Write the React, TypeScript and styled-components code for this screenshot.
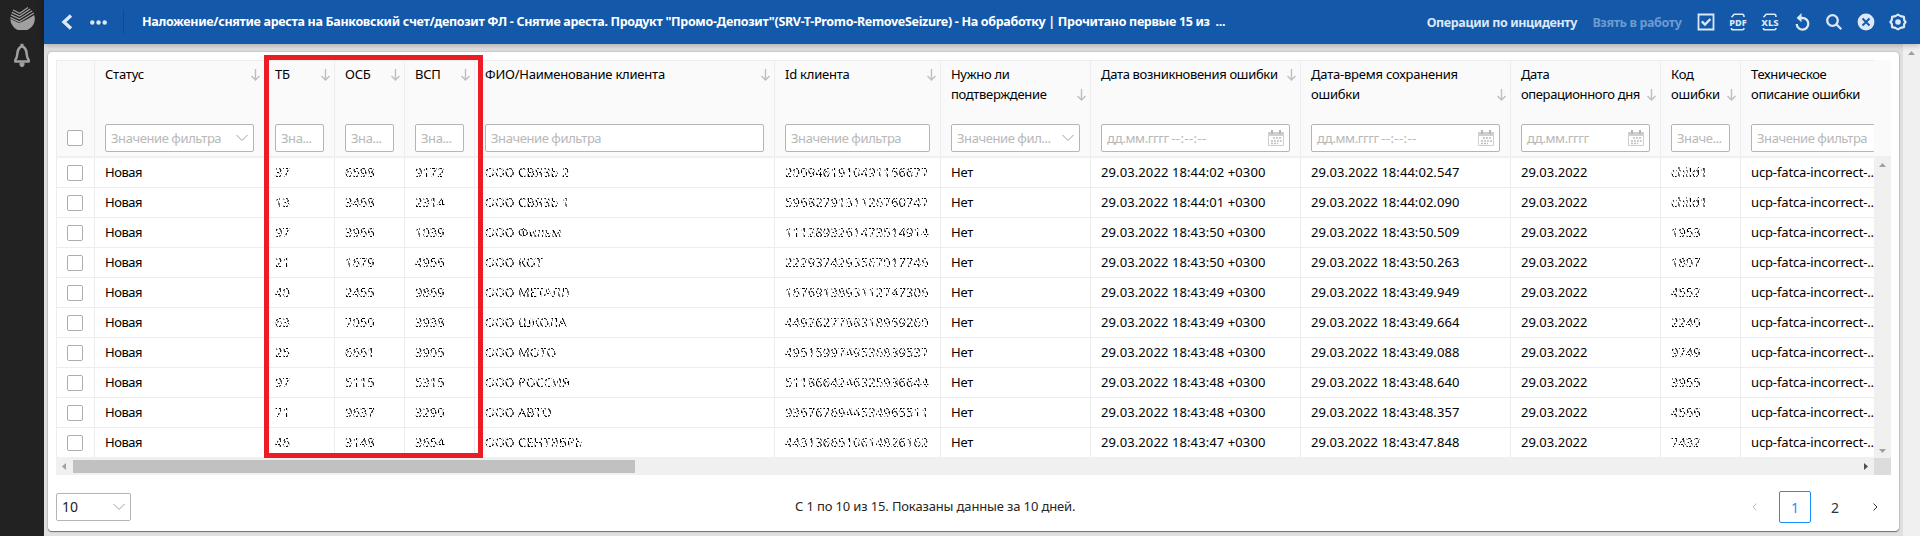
import React from "react";
import styled, { createGlobalStyle, css } from "styled-components";

const GlobalStyle = createGlobalStyle`
  * { box-sizing: border-box; }
  body { margin: 0; background: #e0e0e0; overflow: hidden; }
  body, input, button { font-family: "Noto Sans", "Open Sans", sans-serif; font-size: 13px; color: #000; }
`;

const Page = styled.div`
  display: flex;
  width: 1920px;
  height: 536px;
`;

const Sidebar = styled.nav`
  width: 44px;
  flex: none;
  background: #222;
  display: flex;
  flex-direction: column;
  align-items: center;
  padding-top: 6px;
  gap: 13px;
  svg { display: block; }
`;

const Main = styled.div`
  flex: 1;
  min-width: 0;
  display: flex;
  flex-direction: column;
`;

const TopBar = styled.header`
  height: 44px;
  flex: none;
  background: #1358a9;
  color: #fff;
  display: flex;
  align-items: center;
  padding: 0 13px 0 17px;
  z-index: 1;
  box-shadow: 0 1px 6px rgba(0, 0, 0, 0.28);
  svg { display: block; flex: none; }
`;

const MoreButton = styled.span`
  display: flex;
  margin: 0 16px 0 17px;
`;

const BarDivider = styled.span`
  width: 1px;
  height: 24px;
  background: #0f4a8f;
`;

const Title = styled.h1`
  margin: -1px 0 0 18px;
  font-size: 12.5px;
  font-weight: 700;
  line-height: 20px;
  white-space: pre;
  letter-spacing: -0.32px;
  flex: 1;
`;

const BarAction = styled.span<{ $dim?: boolean }>`
  font-size: 12.5px;
  font-weight: 700;
  line-height: 20px;
  margin: 2px 15.5px 0 0;
  white-space: nowrap;
  letter-spacing: -0.37px;
  color: ${(p) => (p.$dim ? "#6d9bd0" : "#dce8f6")};
`;

const BarIcons = styled.div`
  display: flex;
  gap: 14px;
`;

const Content = styled.div`
  flex: 1;
  min-height: 0;
  display: flex;
`;

const Workspace = styled.main`
  flex: 1;
  min-width: 0;
  padding: 8px 4px 4px;
`;

const Card = styled.section`
  height: 479px;
  background: #fff;
  border-radius: 4px;
  padding: 8px;
  box-shadow: 0 1px 1px rgba(0, 0, 0, 0.45), 0 0 2px rgba(0, 0, 0, 0.35);
`;

const TableFrame = styled.div`
  position: relative;
  width: 1835px;
`;

const Highlight = styled.div`
  position: absolute;
  left: 208px;
  top: -5px;
  width: 219px;
  height: 403px;
  border: 5px solid #ed1c24;
  z-index: 2;
`;

const HeadRow = styled.div`
  display: flex;
  height: 98px;
  width: 1835px;
  background: #fafafa;
  border-bottom: 2px solid #f0f0f0;
`;

const Clip = styled.div`
  display: flex;
  width: 1818px;
  overflow: hidden;
`;

const columnBox = css<{ $w: number; $first?: boolean; $last?: boolean }>`
  flex: none;
  width: ${(p) => p.$w}px;
  border-right: ${(p) => (p.$last ? "none" : "1px solid #ededed")};
  border-left: ${(p) => (p.$first ? "1px solid #ededed" : "none")};
`;

const HeadCell = styled.div<{ $w: number; $first?: boolean; $last?: boolean }>`
  ${columnBox}
  border-top: 1px solid #ededed;
  padding: 3px 10px 4px;
  display: flex;
  flex-direction: column;
  justify-content: space-between;
`;

const HeadTop = styled.div`
  display: flex;
  justify-content: space-between;
  align-items: flex-end;
  margin-right: -6px;
  svg { display: block; flex: none; margin-bottom: 3px; }
`;

const HeadLabel = styled.span<{ $track?: number }>`
  line-height: 20px;
  white-space: pre;
  letter-spacing: ${(p) => p.$track ?? -0.22}px;
`;

const Filter = styled.div`
  flex: none;
  height: 28px;
  border: 1px solid #b5b5b5;
  border-radius: 2px;
  background: #fff;
  display: flex;
  align-items: center;
  justify-content: space-between;
  padding: 0 5px;
  color: #b8b8b8;
  svg { display: block; flex: none; }
`;

const FilterText = styled.span`
  line-height: 26px;
  white-space: pre;
  letter-spacing: -0.42px;
`;

const TimeMask = styled.span`
  letter-spacing: 0.4px;
  margin-left: -0.5px;
`;

const CheckBox = styled.span`
  display: block;
  width: 16px;
  height: 16px;
  border: 1px solid #adadad;
  border-radius: 2px;
  background: #fff;
`;

const HeadCheck = styled.div`
  margin-top: auto;
  padding-bottom: 6px;
`;

const Body = styled.div`
  display: flex;
  height: 299px;
`;

const Rows = styled.div`
  width: 1818px;
  overflow: hidden;
`;

const Row = styled.div`
  display: flex;
  height: 30px;
`;

const Cell = styled.div<{ $w: number; $first?: boolean; $last?: boolean }>`
  ${columnBox}
  border-bottom: 1px solid #ededed;
  padding: 0 0 0 10px;
  display: flex;
  align-items: center;
  white-space: nowrap;
  line-height: 20px;
`;

const CellText = styled.span<{ $track?: number }>`
  letter-spacing: ${(p) => p.$track ?? 0}px;
  margin-top: -1px;
`;

/* Personal data is scratched out so that only fragments of the glyphs stay. */
const Scrubbed = styled(CellText)`
  mask-image: repeating-linear-gradient(63deg, #000 0 1.9px, transparent 1.9px 3.1px);
`;

const VScroll = styled.div`
  width: 17px;
  margin-top: -1px;
  height: 301px;
  background: #f0f0f0;
  display: flex;
  flex-direction: column;
  justify-content: space-between;
  align-items: center;
  padding: 6px 0 5px;
`;

const HScroll = styled.div`
  display: flex;
  height: 18px;
`;

const HTrack = styled.div`
  width: 1818px;
  background: #f0f0f0;
  display: flex;
  align-items: center;
  padding: 0 6px 0 6px;
`;

const HThumb = styled.div`
  width: 562px;
  height: 13px;
  background: #c1c1c1;
  margin: 0 auto 0 7px;
`;

const Corner = styled.div`
  width: 17px;
  height: 17px;
  margin-top: 1px;
  background: #dcdcdc;
`;

const Footer = styled.footer`
  display: flex;
  align-items: center;
  height: 64px;
`;

const PageSize = styled(Filter)`
  width: 75px;
  color: #222;
  font-size: 14px;
  line-height: 24px;
  padding-bottom: 1px;
`;

const Summary = styled.span`
  color: #262626;
  letter-spacing: -0.14px;
  margin: -2px 0 0 664px;
`;

const Pager = styled.div`
  display: flex;
  align-items: center;
  gap: 8px;
  margin-left: auto;
  padding-right: 13px;
  font-size: 14px;
`;

const PagerArrow = styled.svg<{ $next?: boolean }>`
  display: block;
  margin: ${(p) => (p.$next ? "0 0 0 14px" : "0 14px 0 0")};
`;

const PageNumber = styled.span<{ $active?: boolean }>`
  width: 32px;
  height: 32px;
  border: 1px solid ${(p) => (p.$active ? "#1890ff" : "transparent")};
  border-radius: 2px;
  color: ${(p) => (p.$active ? "#1890ff" : "#333")};
  display: flex;
  align-items: center;
  justify-content: center;
`;

const PageScroll = styled.div`
  width: 17px;
  background: #f0f0f0;
  display: flex;
  justify-content: center;
  padding-top: 7px;
`;

const SortArrow = () => (
  <svg width="9" height="12" viewBox="0 0 9 12" fill="none" stroke="#bfbfbf" strokeWidth="1.4">
    <path d="M4.5 0V11M0.5 7l4 4 4-4" />
  </svg>
);

const ChevronDown = () => (
  <svg width="12" height="8" viewBox="0 0 12 8" fill="none" stroke="#a0a0a0" strokeWidth="1">
    <path d="M0.5 1l5.5 5.5L11.5 1" />
  </svg>
);

const Calendar = () => (
  <svg width="16" height="16" viewBox="0 0 16 16">
    <path d="M0.5 2.5h15v13h-15z" fill="#fff" stroke="#cfcfcf" />
    <path d="M0 2h16v4H0z" fill="#cfcfcf" />
    <path d="M3 0h2v4H3zM11 0h2v4h-2z" fill="#b5b5b5" />
    <path d="M5 8h9M3 11h11M3 13.500h7" stroke="#bdbdbd" strokeWidth="1.600" strokeDasharray="2 1" />
  </svg>
);

const Triangle = ({ dir, color = "#a0a0a0" }: { dir: "up" | "down" | "left" | "right"; color?: string }) => {
  const shapes = { up: "M0 4L3.5 0 7 4z", down: "M0 0L3.5 4 7 0z", left: "M4 0L0 3.5 4 7z", right: "M0 0L4 3.5 0 7z" };
  const upright = dir === "up" || dir === "down";
  return (
    <svg width={upright ? 7 : 4} height={upright ? 4 : 7}>
      <path d={shapes[dir]} fill={color} />
    </svg>
  );
};

const Logo = () => (
  <svg width="25" height="24" viewBox="0 0 25 24">
    <path d="M24.2 9A12.2 12.2 0 1 1 0.4 13L9 17Q15 15 24.2 9z" fill="#a0a0a0" />
    <g fill="none" stroke="#a0a0a0" strokeWidth="1.200">
      <path d="M0.4 11.6L9.4 15.700 23.8 7" />
      <path d="M1 8.900L9.4 12.900 22.2 4.800" />
      <path d="M1.800 6.400L9.6 10.100 20.200 3" />
      <path d="M3 4L9.8 7.300 18 1.500" />
    </g>
  </svg>
);

const Bell = () => (
  <svg width="18" height="24" viewBox="0 0 18 24">
    <path d="M9 3.2C5.8 4.2 4.6 7 4.3 11c-.2 3-.8 4.6-2 6v1.6h13.4V17c-1.2-1.4-1.8-3-2-6C13.4 7 12.2 4.2 9 3.2z" fill="none" stroke="#a0a0a0" strokeWidth="2.5" strokeLinejoin="round" />
    <path d="M7.5 0.800h3V4h-3zM6.5 19.5h5V22L10 24H8l-1.500-2z" fill="#a0a0a0" />
  </svg>
);

const BackIcon = () => (
  <svg width="12" height="16" viewBox="0 0 12 16" fill="none" stroke="#dce8f6" strokeWidth="3.4">
    <path d="M10 1.500L3 8l7 6.500" />
  </svg>
);

const DotsIcon = () => (
  <svg width="17" height="5" viewBox="0 0 17 5" fill="#dce8f6">
    <circle cx="2.300" cy="2.500" r="2.200" />
    <circle cx="8.500" cy="2.500" r="2.200" />
    <circle cx="14.700" cy="2.500" r="2.200" />
  </svg>
);

const ICON = "#dce8f6";

const CheckIcon = () => (
  <svg width="18" height="18" viewBox="0 0 18 18" fill="none" stroke={ICON}>
    <path d="M1.500 1.500h15v15h-15z" strokeWidth="1.800" />
    <path d="M4.800 8.400l3.200 3.200 5.400-5.600" strokeWidth="2.300" />
  </svg>
);

const FileIcon = ({ label }: { label: string }) => (
  <svg width="18" height="18" viewBox="0 0 18 18">
    <path d="M2.500 4.200L5.200 1.200h8.300q1.500 0 1.500 2.800M2.500 15q0 1.800 1.500 1.800h9.500q1.500 0 1.500-1.800" fill="none" stroke={ICON} strokeWidth="1.600" />
    <text x="9" y="13" textAnchor="middle" textLength="17.500" lengthAdjust="spacingAndGlyphs" fontSize="9.500" fontWeight="800" fill={ICON}>
      {label}
    </text>
  </svg>
);

const RefreshIcon = () => (
  <svg width="18" height="18" viewBox="0 0 18 18" fill="none" stroke={ICON} strokeWidth="2.300">
    <path d="M7 5h2.500a5.800 5.800 0 1 1-5.800 6" />
    <path d="M8.500 0L3.600 4.900 8.500 9.300z" fill={ICON} stroke="none" />
  </svg>
);

const SearchIcon = () => (
  <svg width="18" height="18" viewBox="0 0 18 18" fill="none" stroke={ICON} strokeWidth="2.300">
    <circle cx="7.500" cy="7.500" r="5.300" />
    <path d="M11.300 11.300l5 5" />
  </svg>
);

const CloseIcon = () => (
  <svg width="18" height="18" viewBox="0 0 18 18">
    <circle cx="9" cy="9" r="8.400" fill={ICON} />
    <path d="M5.500 5.500l7 7m0-7l-7 7" stroke="#1358a9" strokeWidth="1.900" />
  </svg>
);

const GearIcon = () => (
  <svg width="18" height="18" viewBox="0 0 18 18">
    <path d="M9 1.600l2.600 1.500 3.300.8.300 3.200L16.600 9l-1.400 1.900-.3 3.200-3.300.8L9 16.400l-2.600-1.500-3.300-.8-.3-3.200L1.400 9l1.400-1.900.3-3.200 3.300-.8z" fill="none" stroke={ICON} strokeWidth="2.200" strokeLinejoin="round" />
    <circle cx="9" cy="9" r="2.800" fill={ICON} />
  </svg>
);

type Column = {
  w: number;
  label: string;
  filter: string;
  time?: string;
  kind?: "select" | "date";
  sort?: boolean;
  scrubbed?: boolean;
  headTrack?: number;
  cellTrack?: number;
};

const columns: Column[] = [
  { w: 170, label: "Статус", filter: "Значение фильтра", kind: "select", sort: true, cellTrack: -0.5 },
  { w: 70, label: "ТБ", filter: "Зна...", sort: true, scrubbed: true },
  { w: 70, label: "ОСБ", filter: "Зна...", sort: true, scrubbed: true },
  { w: 70, label: "ВСП", filter: "Зна...", sort: true, scrubbed: true },
  { w: 300, label: "ФИО/Наименование клиента", filter: "Значение фильтра", sort: true, scrubbed: true },
  { w: 166, label: "Id клиента", filter: "Значение фильтра", sort: true, scrubbed: true, cellTrack: 0.13 },
  { w: 150, label: "Нужно ли\nподтверждение", filter: "Значение фил...", kind: "select", sort: true, headTrack: -0.3, cellTrack: -0.2 },
  { w: 210, label: "Дата возникновения ошибки", filter: "дд.мм.гггг ", time: "--:--:--", kind: "date", sort: true, headTrack: -0.33, cellTrack: 0.1 },
  { w: 210, label: "Дата-время сохранения\nошибки", filter: "дд.мм.гггг ", time: "--:--:--", kind: "date", sort: true, cellTrack: 0.05 },
  { w: 150, label: "Дата\nоперационного дня", filter: "дд.мм.гггг", kind: "date", sort: true, headTrack: -0.38 },
  { w: 80, label: "Код\nошибки", filter: "Значе...", sort: true, scrubbed: true },
  { w: 160, label: "Техническое\nописание ошибки", filter: "Значение фильтра", headTrack: -0.33, cellTrack: -0.14 },
];

const rows = [
  ["37", "6598", "9172", "ООО СВЯЗЬ 2", "2009461910491156677", "18:44:02", "18:44:02.547", "child1"],
  ["13", "3468", "2314", "ООО СВЯЗЬ 1", "5968279131126760747", "18:44:01", "18:44:02.090", "child1"],
  ["97", "3966", "1039", "ООО Фильм", "1112893261473514914", "18:43:50", "18:43:50.509", "1953"],
  ["21", "1679", "4956", "ООО КОТ", "2229374293567017746", "18:43:50", "18:43:50.263", "1807"],
  ["40", "2455", "9869", "ООО МЕТАЛЛ", "1676913893112747306", "18:43:49", "18:43:49.949", "4552"],
  ["63", "7050", "3938", "ООО ШКОЛА", "4492627788318959260", "18:43:49", "18:43:49.664", "2240"],
  ["25", "6661", "3905", "ООО МОТО", "4951599749536839537", "18:43:48", "18:43:49.088", "9749"],
  ["97", "5115", "5315", "ООО РОССИЯ", "5118664246325936644", "18:43:48", "18:43:48.640", "3955"],
  ["71", "9637", "3290", "ООО АВТО", "9367676944534965511", "18:43:48", "18:43:48.357", "4566"],
  ["46", "3148", "3654", "ООО СЕНТЯБРЬ", "4431366510614826162", "18:43:47", "18:43:47.848", "7432"],
].map(([tb, osb, vsp, name, id, time, saved, code]) => [
  "Новая",
  tb,
  osb,
  vsp,
  name,
  id,
  "Нет",
  `29.03.2022 ${time} +0300`,
  `29.03.2022 ${saved}`,
  "29.03.2022",
  code,
  "ucp-fatca-incorrect-..",
]);

export default function App() {
  return (
    <Page>
      <GlobalStyle />
      <Sidebar>
        <Logo />
        <Bell />
      </Sidebar>
      <Main>
        <TopBar>
          <BackIcon />
          <MoreButton>
            <DotsIcon />
          </MoreButton>
          <BarDivider />
          <Title>
            {'Наложение/снятие ареста на Банковский счет/депозит ФЛ - Снятие ареста. Продукт "Промо-Депозит"(SRV-T-Promo-RemoveSeizure) - На обработку | Прочитано первые 15 из  ...'}
          </Title>
          <BarAction>Операции по инциденту</BarAction>
          <BarAction $dim>Взять в работу</BarAction>
          <BarIcons>
            <CheckIcon />
            <FileIcon label="PDF" />
            <FileIcon label="XLS" />
            <RefreshIcon />
            <SearchIcon />
            <CloseIcon />
            <GearIcon />
          </BarIcons>
        </TopBar>
        <Content>
          <Workspace>
            <Card>
              <TableFrame>
                <HeadRow>
                  <Clip>
                    <HeadCell $w={39} $first>
                      <HeadCheck>
                        <CheckBox />
                      </HeadCheck>
                    </HeadCell>
                    {columns.map((c, i) => (
                      <HeadCell key={i} $w={c.w} $last={i === columns.length - 1}>
                        <HeadTop>
                          <HeadLabel $track={c.headTrack}>{c.label}</HeadLabel>
                          {c.sort && <SortArrow />}
                        </HeadTop>
                        <Filter>
                          <FilterText>
                            {c.filter}
                            {c.time && <TimeMask>{c.time}</TimeMask>}
                          </FilterText>
                          {c.kind === "select" && <ChevronDown />}
                          {c.kind === "date" && <Calendar />}
                        </Filter>
                      </HeadCell>
                    ))}
                  </Clip>
                </HeadRow>
                <Body>
                  <Rows>
                    {rows.map((r, n) => (
                      <Row key={n}>
                        <Cell $w={39} $first>
                          <CheckBox />
                        </Cell>
                        {r.map((value, i) => {
                          const Value = columns[i].scrubbed ? Scrubbed : CellText;
                          return (
                            <Cell key={i} $w={columns[i].w} $last={i === columns.length - 1}>
                              <Value $track={columns[i].cellTrack}>{value}</Value>
                            </Cell>
                          );
                        })}
                      </Row>
                    ))}
                  </Rows>
                  <VScroll>
                    <Triangle dir="up" />
                    <Triangle dir="down" />
                  </VScroll>
                </Body>
                <HScroll>
                  <HTrack>
                    <Triangle dir="left" />
                    <HThumb />
                    <Triangle dir="right" color="#505050" />
                  </HTrack>
                  <Corner />
                </HScroll>
                <Highlight />
              </TableFrame>
              <Footer>
                <PageSize>
                  <span>10</span>
                  <ChevronDown />
                </PageSize>
                <Summary>С 1 по 10 из 15. Показаны данные за 10 дней.</Summary>
                <Pager>
                  <PagerArrow width="5" height="8" viewBox="0 0 5 8" fill="none" stroke="#bbb">
                    <path d="M4.500 0.500L1 4l3.500 3.500" />
                  </PagerArrow>
                  <PageNumber $active>1</PageNumber>
                  <PageNumber>2</PageNumber>
                  <PagerArrow $next width="5" height="8" viewBox="0 0 5 8" fill="none" stroke="#333">
                    <path d="M0.500 0.500L4 4 0.500 7.500" />
                  </PagerArrow>
                </Pager>
              </Footer>
            </Card>
          </Workspace>
          <PageScroll>
            <Triangle dir="up" />
          </PageScroll>
        </Content>
      </Main>
    </Page>
  );
}
